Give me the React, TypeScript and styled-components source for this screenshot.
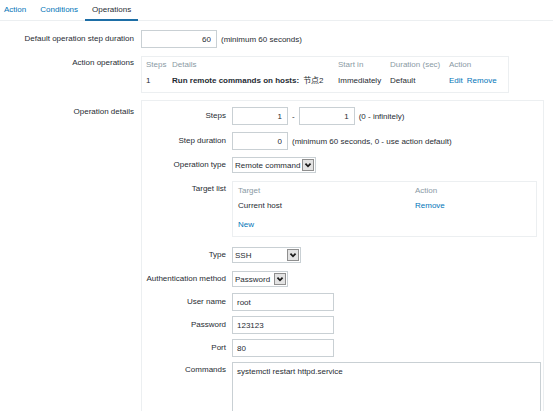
import React from "react";
import styled, { createGlobalStyle } from "styled-components";

const GlobalStyle = createGlobalStyle`
  html, body {
    margin: 0;
    padding: 0;
    background: #fff;
    overflow: hidden;
  }
  body {
    font-family: "Liberation Sans", Arial, "Noto Sans CJK SC", sans-serif;
    font-size: 8px;
    color: #1f2c33;
  }
`;

const Page = styled.div`
  width: 558px;
  height: 411px;
`;

const TabBar = styled.nav`
  display: flex;
  height: 20px;
  margin-right: 5px;
  border-bottom: 1px solid #eceff1;
`;

const Tab = styled.a<{ $active?: boolean }>`
  box-sizing: border-box;
  height: 21px;
  padding: 0 7px;
  line-height: 19px;
  color: ${(p) => (p.$active ? "#1f2c33" : "#0275b8")};
  border-bottom: 2px solid ${(p) => (p.$active ? "#1d6ea6" : "transparent")};
  text-decoration: none;
  cursor: pointer;
  &:first-child {
    padding-left: 4px;
  }
`;

const FormGrid = styled.div`
  display: grid;
  grid-template-columns: 134px auto;
  column-gap: 7px;
  row-gap: 7px;
  align-items: start;
  justify-items: start;
  padding-top: 9px;
`;

const Label = styled.div<{ $shift?: number }>`
  justify-self: stretch;
  text-align: right;
  line-height: 18px;
  white-space: nowrap;
  margin-top: ${(p) => p.$shift ?? 0}px;
`;

const Field = styled.div`
  display: flex;
  align-items: center;
  gap: 4px;
  height: 18px;
  white-space: nowrap;
`;

const NumInput = styled.input<{ $w: number }>`
  box-sizing: border-box;
  width: ${(p) => p.$w}px;
  height: 18px;
  margin: 0;
  padding: 0 5px 0 4px;
  border: 1px solid #c9d0d4;
  font: inherit;
  color: #1f2c33;
  text-align: right;
  outline: none;
`;

const TextInput = styled(NumInput)`
  text-align: left;
`;

const Hint = styled.span`
  white-space: nowrap;
`;

const OpsBox = styled.div`
  box-sizing: border-box;
  width: 368px;
  margin-top: 1px;
  padding: 0 4px 3px;
  border: 1px solid #eceff1;
  display: grid;
  grid-template-columns: 26px 166px 52px 59px auto;
  line-height: 16px;
  white-space: nowrap;
`;

const HeadCell = styled.div`
  color: #8a9aa4;
`;

const Cell = styled.div<{ $bold?: boolean }>`
  font-weight: ${(p) => (p.$bold ? "bold" : "normal")};
  display: flex;
  gap: 4px;
`;

const Link = styled.a`
  color: #0275b8;
  cursor: pointer;
  text-decoration: none;
`;

const DetailsBox = styled.div`
  box-sizing: border-box;
  width: 403px;
  height: 320px;
  padding-top: 6px;
  border: 1px solid #eceff1;
  border-bottom: none;
  display: flex;
  flex-direction: column;
`;

const DetailRow = styled.div<{ $mt?: number; $top?: boolean }>`
  display: grid;
  grid-template-columns: 84px auto;
  column-gap: 6px;
  align-items: ${(p) => (p.$top ? "start" : "center")};
  justify-items: start;
  margin-top: ${(p) => p.$mt ?? 5}px;
  &:first-child {
    margin-top: 0;
  }
`;

const RowLabel = styled.div`
  justify-self: stretch;
  text-align: right;
  white-space: nowrap;
  line-height: 16px;
`;

const SelectBox = styled.div<{ $w: number }>`
  box-sizing: border-box;
  width: ${(p) => p.$w}px;
  height: 16px;
  padding-left: 2px;
  border: 1px solid #c9d0d4;
  display: flex;
  align-items: center;
  justify-content: space-between;
  white-space: nowrap;
`;

const ArrowBtn = styled.span`
  box-sizing: border-box;
  width: 12px;
  height: 12px;
  margin-right: 1px;
  background: #e3e3e3;
  border: 1px solid #8f8f8f;
  display: flex;
  align-items: center;
  justify-content: center;
`;

const TargetBox = styled.div`
  box-sizing: border-box;
  width: 305px;
  height: 56px;
  padding: 1px 5px 0;
  border: 1px solid #eceff1;
  display: grid;
  grid-template-columns: 177px auto;
  grid-auto-rows: 15px;
  line-height: 15px;
`;

const NewRow = styled.div`
  grid-column: 1 / -1;
  margin-top: 4px;
`;

const CommandsArea = styled.textarea`
  box-sizing: border-box;
  width: 309px;
  height: 60px;
  margin: 0;
  padding: 4px;
  border: 1px solid #c9d0d4;
  font: inherit;
  color: #1f2c33;
  resize: none;
  outline: none;
`;

const Chevron = () => (
  <svg width="8" height="8" viewBox="0 0 10 10">
    <path d="M1.8 3.2 L5 6.6 L8.2 3.2" stroke="#1a1a1a" strokeWidth="2.2" fill="none" />
  </svg>
);

const Select = ({ value, width }: { value: string; width: number }) => (
  <SelectBox $w={width}>
    <span>{value}</span>
    <ArrowBtn>
      <Chevron />
    </ArrowBtn>
  </SelectBox>
);

export default function App() {
  return (
    <Page>
      <GlobalStyle />
      <TabBar>
        <Tab>Action</Tab>
        <Tab>Conditions</Tab>
        <Tab $active>Operations</Tab>
      </TabBar>
      <FormGrid>
        <Label>Default operation step duration</Label>
        <Field>
          <NumInput $w={76} readOnly defaultValue="60" />
          <Hint>(minimum 60 seconds)</Hint>
        </Field>

        <Label $shift={-1}>Action operations</Label>
        <OpsBox>
          <HeadCell>Steps</HeadCell>
          <HeadCell>Details</HeadCell>
          <HeadCell>Start in</HeadCell>
          <HeadCell>Duration (sec)</HeadCell>
          <HeadCell>Action</HeadCell>
          <Cell>1</Cell>
          <Cell $bold>
            Run remote commands on hosts: <span style={{ fontWeight: "normal" }}>节点2</span>
          </Cell>
          <Cell>Immediately</Cell>
          <Cell>Default</Cell>
          <Cell>
            <Link>Edit</Link>
            <Link>Remove</Link>
          </Cell>
        </OpsBox>

        <Label $shift={3}>Operation details</Label>
        <DetailsBox>
          <DetailRow>
            <RowLabel>Steps</RowLabel>
            <Field>
              <NumInput $w={56} readOnly defaultValue="1" />
              <span>-</span>
              <NumInput $w={56} readOnly defaultValue="1" />
              <Hint>(0 - infinitely)</Hint>
            </Field>
          </DetailRow>

          <DetailRow $mt={7}>
            <RowLabel>Step duration</RowLabel>
            <Field>
              <NumInput $w={56} readOnly defaultValue="0" />
              <Hint>(minimum 60 seconds, 0 - use action default)</Hint>
            </Field>
          </DetailRow>

          <DetailRow $mt={7}>
            <RowLabel>Operation type</RowLabel>
            <Select value="Remote command" width={84} />
          </DetailRow>

          <DetailRow $mt={8} $top>
            <RowLabel>Target list</RowLabel>
            <TargetBox>
              <HeadCell>Target</HeadCell>
              <HeadCell>Action</HeadCell>
              <div>Current host</div>
              <Link>Remove</Link>
              <NewRow>
                <Link>New</Link>
              </NewRow>
            </TargetBox>
          </DetailRow>

          <DetailRow $mt={10}>
            <RowLabel>Type</RowLabel>
            <Select value="SSH" width={69} />
          </DetailRow>

          <DetailRow $mt={8}>
            <RowLabel>Authentication method</RowLabel>
            <Select value="Password" width={56} />
          </DetailRow>

          <DetailRow $mt={6}>
            <RowLabel>User name</RowLabel>
            <TextInput $w={102} readOnly defaultValue="root" />
          </DetailRow>

          <DetailRow $mt={5}>
            <RowLabel>Password</RowLabel>
            <TextInput $w={102} readOnly defaultValue="123123" />
          </DetailRow>

          <DetailRow $mt={5}>
            <RowLabel>Port</RowLabel>
            <TextInput $w={102} readOnly defaultValue="80" />
          </DetailRow>

          <DetailRow $mt={5} $top>
            <RowLabel>Commands</RowLabel>
            <CommandsArea readOnly defaultValue="systemctl restart httpd.service" />
          </DetailRow>
        </DetailsBox>
      </FormGrid>
    </Page>
  );
}
